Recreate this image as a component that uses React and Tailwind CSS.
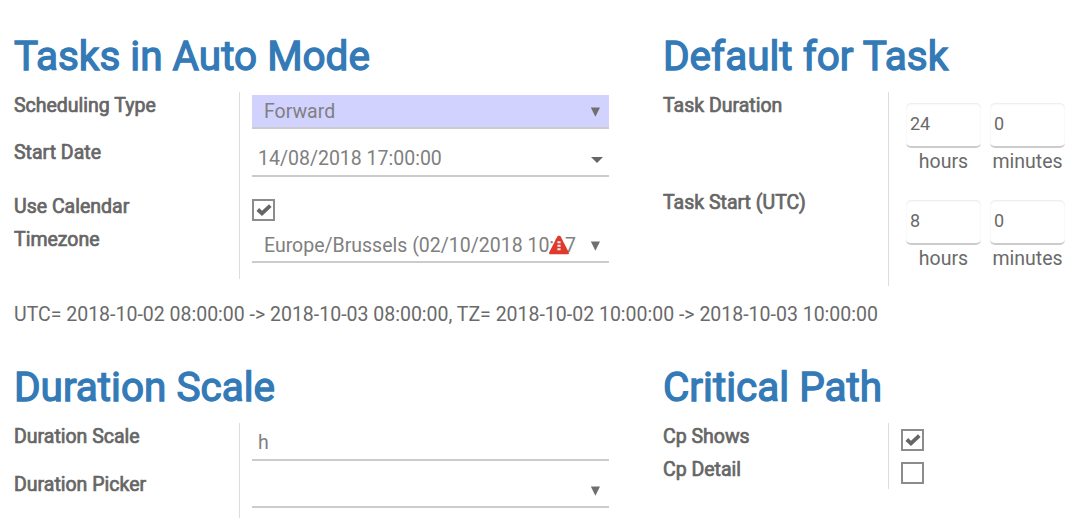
import React from "react";

function Heading({ children }) {
  return (
    <h2 className="h-[92px] pt-[30px] text-[40.5px] leading-[52px] whitespace-nowrap text-[#337ab7] [-webkit-text-stroke:1.3px_#337ab7]">
      {children}
    </h2>
  );
}

function Row({ label, height, children }) {
  return (
    <div className={`flex ${height}`}>
      <div className="w-[225px] shrink-0 pt-[3px] leading-[22px] whitespace-nowrap text-[#666] [-webkit-text-stroke:0.7px_#666]">
        {label}
      </div>
      <div className="flex-1 border-l border-[#ddd] pl-3">{children}</div>
    </div>
  );
}

function Arrow() {
  return (
    <svg className="relative top-px h-[10px] w-[10px] shrink-0" viewBox="0 0 10 10">
      <path d="M0.8 0.5H10L5.4 9.7Z" fill="#6f6f6f" />
    </svg>
  );
}

function Caret() {
  return (
    <svg className="relative top-px h-[6px] w-3 shrink-0" viewBox="0 0 12 6">
      <path d="M0 0H12L6 6Z" fill="#666" />
    </svg>
  );
}

function Warning() {
  return (
    <svg className="absolute top-[6px] left-[297px] h-5 w-5" viewBox="0 0 20 20">
      <path d="M9.4 2H10.6L18.8 18H1.2Z" fill="#e0392d" stroke="#e0392d" strokeWidth="2.4" strokeLinejoin="round" />
      <path d="M8.4 6.3h3.2v2H8.4zM8.4 9.8h3.2v2H8.4zM8.4 13.3h3.2v2H8.4z" fill="#eee" />
    </svg>
  );
}

function Checkbox({ checked }) {
  return (
    <div className="flex h-[22px] w-[23px] items-center justify-center border-2 border-[#8c8c8c] bg-white">
      {checked && (
        <svg className="h-3 w-4" viewBox="0 0 16 12">
          <path d="M1.8 5.5L6 9.4L14.3 1.7" fill="none" stroke="#666" strokeWidth="3.8" />
        </svg>
      )}
    </div>
  );
}

function NumberBox({ value, unit }) {
  return (
    <div className="flex w-[75px] flex-col items-center">
      <div className="flex h-[45px] w-full items-center rounded-[5px] border-b-2 border-[#ccc] pb-[3px] pl-1 text-[18px] shadow-[inset_0_1px_2px_rgba(0,0,0,0.09)]">
        {value}
      </div>
      <span className="h-[27px] leading-[27px]">{unit}</span>
    </div>
  );
}

function TimePair({ hours, minutes }) {
  return (
    <div className="flex gap-[9px] pt-[11px] pl-[5px]">
      <NumberBox value={hours} unit="hours" />
      <NumberBox value={minutes} unit="minutes" />
    </div>
  );
}

const field = "relative flex w-[357px] items-center justify-between border-b-2 border-[#ccc] whitespace-nowrap text-[#808080]";

export default function App() {
  return (
    <main className="h-[526px] w-[1092px] overflow-hidden bg-white pl-[14px] font-[Roboto,sans-serif] text-[19.5px] text-[#6a6a6a]">
      <div className="flex h-[300px]">
        <section className="w-[649px]">
          <Heading>Tasks in Auto Mode</Heading>
          <Row label="Scheduling Type" height="h-[47px] *:last:pt-[3px]">
            <div className={`${field} h-[34px] bg-[#d2d2ff] pr-[9px] pl-3`}>
              <span className="pt-[2px]">Forward</span>
              <Arrow />
            </div>
          </Row>
          <Row label="Start Date" height="h-[54px] *:last:pt-[3px]">
            <div className={`${field} h-[35px] pr-[6px] pl-[6px]`}>
              <span>14/08/2018 17:00:00</span>
              <Caret />
            </div>
          </Row>
          <Row label="Use Calendar" height="h-[33px] *:last:pt-[6px]">
            <Checkbox checked />
          </Row>
          <Row label="Timezone" height="h-[53px] *:last:pt-[3px]">
            <div className={`${field} h-[34px] pr-[9px] pl-3`}>
              <span className="pt-[2px]">Europe/Brussels (02/10/2018 10:17</span>
              <Warning />
              <Arrow />
            </div>
          </Row>
        </section>
        <section className="w-[415px]">
          <Heading>Default for Task</Heading>
          <Row label="Task Duration" height="h-[97px]">
            <TimePair hours="24" minutes="0" />
          </Row>
          <Row label="Task Start (UTC)" height="h-[97px]">
            <TimePair hours="8" minutes="0" />
          </Row>
        </section>
      </div>
      <p className="h-[31px] leading-[30px] whitespace-nowrap">
        UTC= 2018-10-02 08:00:00 -&gt; 2018-10-03 08:00:00, TZ= 2018-10-02 10:00:00 -&gt; 2018-10-03 10:00:00
      </p>
      <div className="flex">
        <section className="w-[649px]">
          <Heading>Duration Scale</Heading>
          <Row label="Duration Scale" height="h-[48px] *:last:pt-[3px]">
            <div className={`${field} h-[35px] pl-[6px]`}>
              <span>h</span>
            </div>
          </Row>
          <Row label="Duration Picker" height="h-[47px] *:last:pt-[3px]">
            <div className={`${field} h-[34px] pr-[9px]`}>
              <span />
              <Arrow />
            </div>
          </Row>
        </section>
        <section className="w-[415px]">
          <Heading>Critical Path</Heading>
          <Row label="Cp Shows" height="h-[33px] *:last:pt-[6px]">
            <Checkbox checked />
          </Row>
          <Row label="Cp Detail" height="h-[33px] *:last:pt-[6px]">
            <Checkbox />
          </Row>
        </section>
      </div>
    </main>
  );
}
